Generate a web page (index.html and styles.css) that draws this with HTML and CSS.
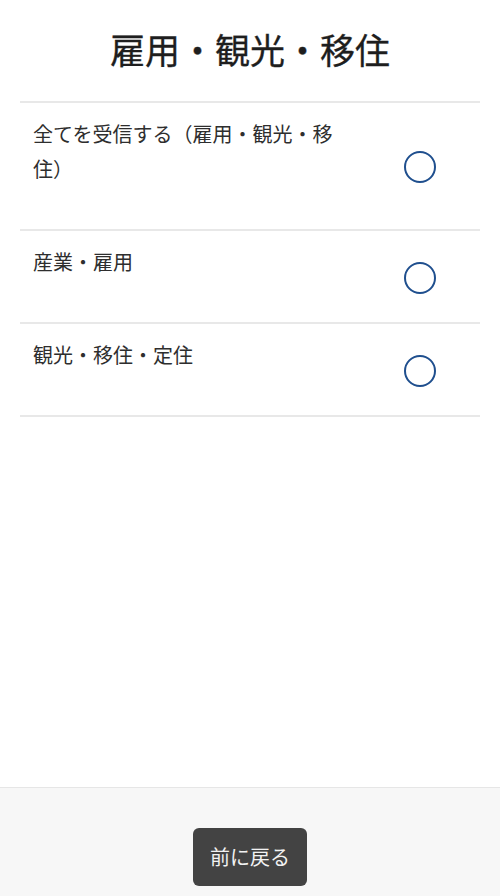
FILE: index.html
```html
<!DOCTYPE html>
<html lang="ja">
<head>
<meta charset="utf-8">
<title>雇用・観光・移住</title>
<link rel="stylesheet" href="styles.css">
</head>
<body>
<div class="page">
  <main class="main">
    <h1 class="title">雇用・観光・移住</h1>
    <ul class="options">
      <li class="option">
        <span class="label">全てを受信する（雇用・観光・移住）</span>
        <span class="radio"></span>
      </li>
      <li class="option">
        <span class="label">産業・雇用</span>
        <span class="radio"></span>
      </li>
      <li class="option">
        <span class="label">観光・移住・定住</span>
        <span class="radio"></span>
      </li>
    </ul>
  </main>
  <footer class="footer">
    <button class="back" type="button">前に戻る</button>
  </footer>
</div>
</body>
</html>
```

FILE: styles.css
```css
html, body {
  margin: 0;
  padding: 0;
  background: #ffffff;
}

body {
  font-family: "Noto Sans CJK JP", "Noto Sans", sans-serif;
  color: #2b2b2b;
}

.page {
  height: 896px;
  display: flex;
  flex-direction: column;
  overflow: hidden;
}

.main {
  flex: 1;
}

.title {
  margin: 0;
  padding: 25px 0 28px;
  font-size: 35px;
  line-height: 48px;
  font-weight: 400;
  text-align: center;
  color: #1e1e1e;
  -webkit-text-stroke: 0.3px #1e1e1e;
}

.options {
  list-style: none;
  margin: 0 20px;
  padding: 0;
}

.option {
  display: flex;
  align-items: center;
  border-top: 2px solid #e8e8e8;
}

.option:last-child {
  border-bottom: 2px solid #e8e8e8;
}

.label {
  flex: 1;
  max-width: 310px;
  padding: 13px 0 43px 13px;
  font-size: 20px;
  line-height: 35px;
  color: #2e2e2e;
}

.radio {
  box-sizing: border-box;
  width: 32px;
  height: 32px;
  border: 2.5px solid #1f4f8e;
  border-radius: 50%;
  margin: 2px 44px 0 auto;
}

.footer {
  height: 109px;
  box-sizing: border-box;
  background: #f7f7f7;
  border-top: 1px solid #e6e6e6;
  padding-top: 40px;
  display: flex;
  justify-content: center;
  align-items: flex-start;
}

.back {
  width: 114px;
  height: 58px;
  border: none;
  border-radius: 6px;
  background: #434343;
  color: #f2f2f2;
  font-family: "Noto Sans CJK JP", "Noto Sans", sans-serif;
  font-size: 20px;
  padding: 0;
  line-height: 58px;
}
```
